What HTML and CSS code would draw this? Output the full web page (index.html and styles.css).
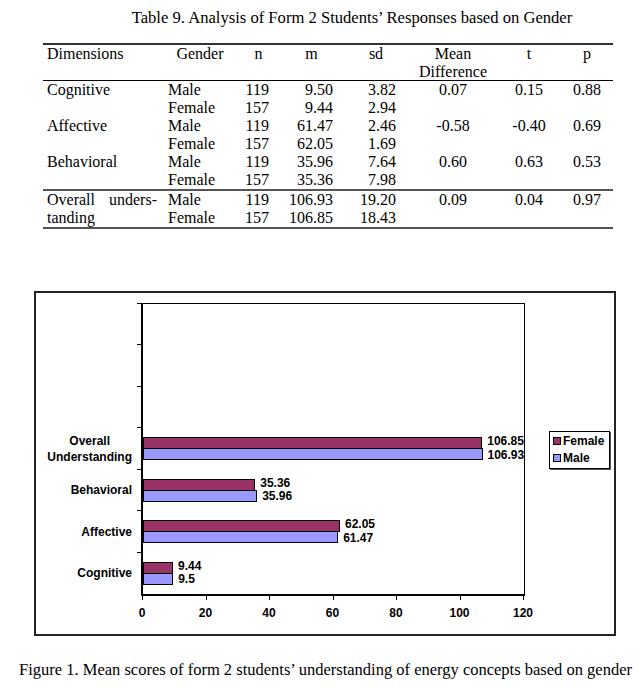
FILE: index.html
```html
<!DOCTYPE html>
<html lang="en">
<head>
<meta charset="utf-8">
<title>Table 9 and Figure 1</title>
<link rel="stylesheet" href="styles.css">
</head>
<body>
<h1 class="title">Table 9. Analysis of Form 2 Students’ Responses based on Gender</h1>
<table class="stats">
  <colgroup>
    <col class="c-dim"><col class="c-gen"><col class="c-n"><col class="c-m"><col class="c-sd"><col class="c-md"><col class="c-t"><col class="c-p">
  </colgroup>
  <thead>
    <tr class="head">
      <th class="left">Dimensions</th>
      <th>Gender</th>
      <th>n</th>
      <th>m</th>
      <th>sd</th>
      <th>Mean<br>Difference</th>
      <th>t</th>
      <th>p</th>
    </tr>
  </thead>
  <tbody>
    <tr><td class="left">Cognitive</td><td class="gen">Male</td><td class="num n">119</td><td class="num m">9.50</td><td class="num sd">3.82</td><td class="mid">0.07</td><td class="mid">0.15</td><td class="mid">0.88</td></tr>
    <tr><td></td><td class="gen">Female</td><td class="num n">157</td><td class="num m">9.44</td><td class="num sd">2.94</td><td></td><td></td><td></td></tr>
    <tr><td class="left">Affective</td><td class="gen">Male</td><td class="num n">119</td><td class="num m">61.47</td><td class="num sd">2.46</td><td class="mid">-0.58</td><td class="mid">-0.40</td><td class="mid">0.69</td></tr>
    <tr><td></td><td class="gen">Female</td><td class="num n">157</td><td class="num m">62.05</td><td class="num sd">1.69</td><td></td><td></td><td></td></tr>
    <tr><td class="left">Behavioral</td><td class="gen">Male</td><td class="num n">119</td><td class="num m">35.96</td><td class="num sd">7.64</td><td class="mid">0.60</td><td class="mid">0.63</td><td class="mid">0.53</td></tr>
    <tr class="group-end"><td></td><td class="gen">Female</td><td class="num n">157</td><td class="num m">35.36</td><td class="num sd">7.98</td><td></td><td></td><td></td></tr>
  </tbody>
  <tbody>
    <tr><td class="left"><span class="just"><span>Overall</span><span>unders-</span></span></td><td class="gen">Male</td><td class="num n">119</td><td class="num m">106.93</td><td class="num sd">19.20</td><td class="mid">0.09</td><td class="mid">0.04</td><td class="mid">0.97</td></tr>
    <tr class="group-end"><td class="left">tanding</td><td class="gen">Female</td><td class="num n">157</td><td class="num m">106.85</td><td class="num sd">18.43</td><td></td><td></td><td></td></tr>
  </tbody>
</table>

<figure class="chart">
  <div class="chart-main">
    <div class="cats">
      <div class="cat"></div>
      <div class="cat"></div>
      <div class="cat"></div>
      <div class="cat">Overall<br>Understanding</div>
      <div class="cat">Behavioral</div>
      <div class="cat">Affective</div>
      <div class="cat">Cognitive</div>
    </div>
    <div class="plot">
      <div class="band"></div>
      <div class="band"></div>
      <div class="band"></div>
      <div class="band">
        <div class="series s-female"><div class="bar female" style="width:89.04%"></div><span class="val">106.85</span></div>
        <div class="series s-male"><div class="bar male" style="width:89.11%"></div><span class="val">106.93</span></div>
      </div>
      <div class="band">
        <div class="series s-female"><div class="bar female" style="width:29.47%"></div><span class="val">35.36</span></div>
        <div class="series s-male"><div class="bar male" style="width:29.97%"></div><span class="val">35.96</span></div>
      </div>
      <div class="band">
        <div class="series s-female"><div class="bar female" style="width:51.71%"></div><span class="val">62.05</span></div>
        <div class="series s-male"><div class="bar male" style="width:51.23%"></div><span class="val">61.47</span></div>
      </div>
      <div class="band">
        <div class="series s-female"><div class="bar female" style="width:7.87%"></div><span class="val">9.44</span></div>
        <div class="series s-male"><div class="bar male" style="width:7.92%"></div><span class="val">9.5</span></div>
      </div>
    </div>
    <div class="legend">
      <div class="legend-item"><span class="swatch female"></span>Female</div>
      <div class="legend-item"><span class="swatch male"></span>Male</div>
    </div>
  </div>
  <div class="axis">
    <span>0</span><span>20</span><span>40</span><span>60</span><span>80</span><span>100</span><span>120</span>
  </div>
</figure>

<p class="caption">Figure 1. Mean scores of form 2 students’ understanding of energy concepts based on gender</p>
</body>
</html>
```

FILE: styles.css
```css
html, body {
  margin: 0;
  padding: 0;
  background: #fff;
  color: #000;
}

body {
  width: 641px;
  font-family: "Liberation Serif", "Times New Roman", serif;
}

.title {
  margin: 8px 0 0 0;
  padding-left: 63px;
  text-align: center;
  font-size: 16.6px;
  line-height: 20px;
  font-weight: normal;
}

/* ---------- table ---------- */
.stats {
  margin: 15px 0 0 43px;
  width: 570px;
  border-collapse: collapse;
  table-layout: fixed;
  font-size: 16px;
  border-top: 2px solid #333;
}

.c-dim { width: 120px; }
.c-gen { width: 74px; }
.c-n { width: 43px; }
.c-m { width: 63px; }
.c-sd { width: 66px; }
.c-md { width: 88px; }
.c-t { width: 64px; }
.c-p { width: 52px; }

.stats th {
  font-weight: normal;
  text-align: center;
  vertical-align: top;
  padding: 0;
  line-height: 17.5px;
}

.stats .head th {
  border-bottom: 1px solid #000;
}

.stats td {
  padding: 0;
  line-height: 18px;
  height: 18px;
  white-space: nowrap;
}

.stats .group-end td {
  border-bottom: 2px solid #555;
}

.stats .left {
  text-align: left;
  padding-left: 4px;
}

.stats .just {
  display: flex;
  justify-content: space-between;
  padding-right: 6px;
}

.stats .gen {
  padding-left: 5px;
}

.stats .num {
  text-align: right;
}

.stats .n { padding-right: 11px; }
.stats .m { padding-right: 10px; }
.stats .sd { padding-right: 13px; }

.stats .mid {
  text-align: center;
}

/* ---------- chart ---------- */
.chart {
  margin: 62px 0 0 34px;
  width: 582px;
  height: 345px;
  box-sizing: border-box;
  border: 2px solid #222;
  padding-top: 10px;
  font-family: "Liberation Sans", Arial, sans-serif;
  font-weight: bold;
  font-size: 12px;
}

.chart-main {
  display: flex;
  align-items: stretch;
}

.cats {
  width: 96px;
  margin-right: 9px;
  display: grid;
  grid-template-rows: repeat(7, 1fr);
  padding: 1px 0 2px 0;
}

.cat {
  display: flex;
  align-items: center;
  justify-content: flex-end;
  text-align: center;
  line-height: 16px;
}

.plot {
  width: 384px;
  height: 293px;
  box-sizing: border-box;
  border-top: 1px solid #000;
  border-right: 1px solid #000;
  border-left: 2px solid #000;
  border-bottom: 2px solid #000;
  display: grid;
  grid-template-rows: repeat(7, 1fr);
}

.band {
  position: relative;
  display: flex;
  flex-direction: column;
  justify-content: center;
}

.band::before {
  content: "";
  position: absolute;
  left: -6px;
  top: -1px;
  width: 4px;
  height: 1px;
  background: #000;
}

.series {
  display: flex;
  align-items: center;
  height: 12px;
}

.series + .series {
  margin-top: -1px;
}

.bar {
  flex: none;
  height: 12px;
  box-sizing: border-box;
  border: 1px solid #000;
}

.female { background: #993366; }
.male { background: #9999ff; }

.val {
  margin-left: 5px;
  line-height: 12px;
  white-space: nowrap;
}

.s-female .val {
  margin-bottom: 4px;
}

.s-male .val {
  margin-top: 1px;
}

.legend {
  align-self: center;
  margin-left: 24px;
  width: 61px;
  box-sizing: border-box;
  border: 1px solid #000;
  box-shadow: 1px 1px 0 #555;
  padding: 1px 0 1px 3px;
}

.legend-item {
  display: flex;
  align-items: center;
  line-height: 17px;
}

.swatch {
  width: 8px;
  height: 8px;
  box-sizing: border-box;
  border: 1px solid #000;
  margin-right: 2px;
}

.axis {
  display: grid;
  grid-template-columns: repeat(7, 63.5px);
  margin-left: 74.25px;
}

.axis span {
  position: relative;
  text-align: center;
  padding-top: 10px;
  line-height: 14px;
}

.axis span::before {
  content: "";
  position: absolute;
  top: 0;
  left: 50%;
  width: 1px;
  height: 4px;
  background: #000;
}

/* ---------- caption ---------- */
.caption {
  margin: 24px 0 0 0;
  padding-left: 10px;
  text-align: center;
  font-size: 16.5px;
  line-height: 20px;
}
```
